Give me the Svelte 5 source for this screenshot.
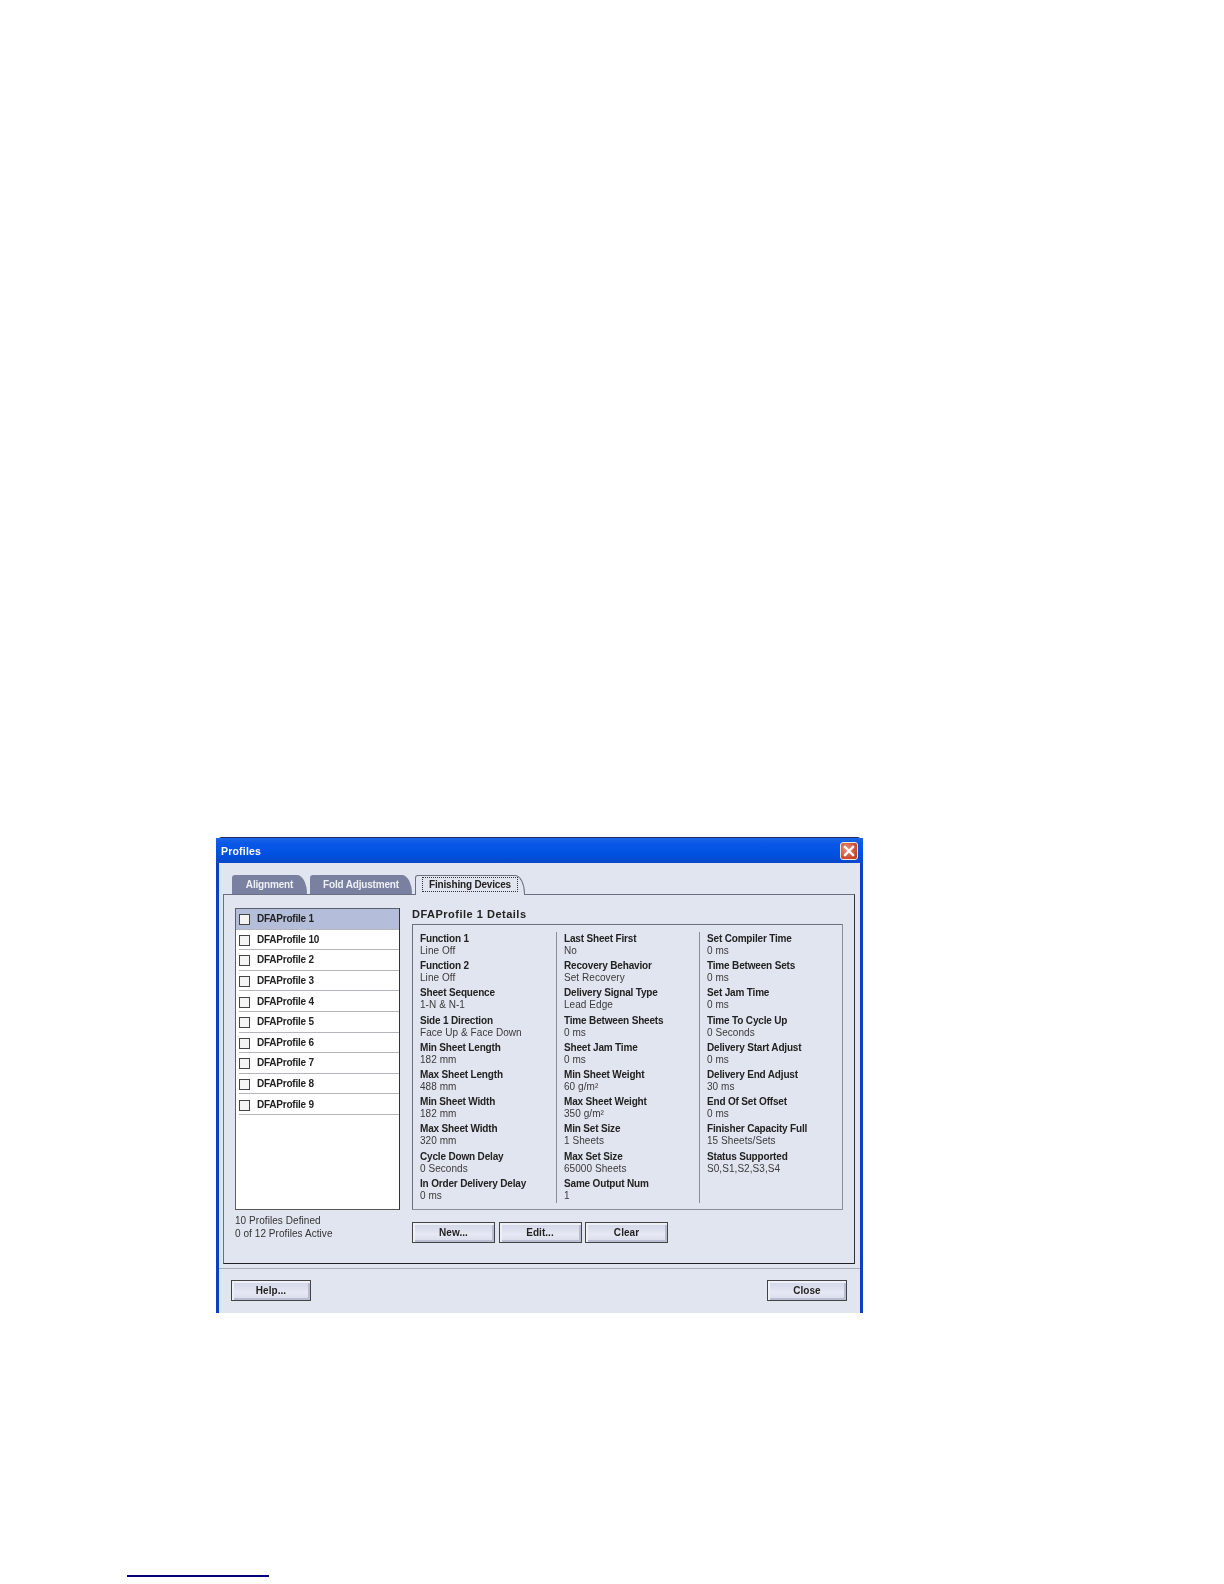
<script>
  const profiles = ['DFAProfile 1','DFAProfile 10','DFAProfile 2','DFAProfile 3','DFAProfile 4','DFAProfile 5','DFAProfile 6','DFAProfile 7','DFAProfile 8','DFAProfile 9'];
  const columns = [
    [['Function 1','Line Off'],['Function 2','Line Off'],['Sheet Sequence','1-N & N-1'],['Side 1 Direction','Face Up & Face Down'],['Min Sheet Length','182 mm'],['Max Sheet Length','488 mm'],['Min Sheet Width','182 mm'],['Max Sheet Width','320 mm'],['Cycle Down Delay','0 Seconds'],['In Order Delivery Delay','0 ms']],
    [['Last Sheet First','No'],['Recovery Behavior','Set Recovery'],['Delivery Signal Type','Lead Edge'],['Time Between Sheets','0 ms'],['Sheet Jam Time','0 ms'],['Min Sheet Weight','60 g/m²'],['Max Sheet Weight','350 g/m²'],['Min Set Size','1 Sheets'],['Max Set Size','65000 Sheets'],['Same Output Num','1']],
    [['Set Compiler Time','0 ms'],['Time Between Sets','0 ms'],['Set Jam Time','0 ms'],['Time To Cycle Up','0 Seconds'],['Delivery Start Adjust','0 ms'],['Delivery End Adjust','30 ms'],['End Of Set Offset','0 ms'],['Finisher Capacity Full','15 Sheets/Sets'],['Status Supported','S0,S1,S2,S3,S4']]
  ];
</script>

<div class="page">
  <div class="window">
    <div class="titlebar">
      <span class="title">Profiles</span>
      <span class="close-x">
        <svg width="18" height="18" viewBox="0 0 18 18"><path d="M5 5l8 8M13 5l-8 8" stroke="#fff" stroke-width="2.4" stroke-linecap="square" fill="none"/></svg>
      </span>
    </div>
    <div class="client">
      <div class="tabs">
        <div class="tab t1">Alignment</div>
        <div class="tab t2">Fold Adjustment</div>
        <div class="tab active"><span class="focus">Finishing Devices</span></div>
      </div>
      <div class="panel">
        <div class="left">
          <div class="list">
            {#each profiles as p, i}
              <div class="row" class:sel={i === 0}><span class="check"></span><span>{p}</span></div>
            {/each}
          </div>
          <div class="count">10 Profiles Defined<br />0 of 12 Profiles Active</div>
        </div>
        <div class="right">
          <div class="heading">DFAProfile 1 Details</div>
          <div class="details">
            {#each columns as col}
              <div class="col">
                {#each col as [label, value]}
                  <div class="item"><div class="label">{label}</div><div class="value">{value}</div></div>
                {/each}
              </div>
            {/each}
          </div>
          <div class="actions">
            <button class="btn">New...</button>
            <button class="btn">Edit...</button>
            <button class="btn">Clear</button>
          </div>
        </div>
      </div>
      <div class="footer">
        <button class="btn foot">Help...</button>
        <button class="btn foot dark">Close</button>
      </div>
    </div>
  </div>
  <div class="rule"></div>
</div>

<style>
  :global(body) { margin: 0; background: #fff; }
  .page { width: 1224px; height: 1584px; padding-top: 837px; box-sizing: border-box; font-family: "Liberation Sans", Arial, sans-serif; color: #222; overflow: hidden; filter: blur(0.4px); }
  .window { margin-left: 216px; width: 647px; height: 476px; box-sizing: border-box; display: flex; flex-direction: column; background: #0f3fc0; border-radius: 6px 6px 0 0; border-top: 1px solid #1a2a60; }
  .titlebar { height: 25px; flex: none; display: flex; align-items: center; justify-content: space-between; padding: 0 5px 0 5px; background: linear-gradient(#1f66e6 0, #0a58e8 20%, #0050e0 70%, #0a48c8 100%); }
  .title { color: #fff; font-size: 10.5px; font-weight: 700; letter-spacing: 0.2px; }
  .close-x { width: 18px; height: 18px; border: 1px solid #f0e8e0; border-radius: 3px; background: radial-gradient(circle at 35% 35%, #e8917a, #c8482a 70%, #b03a20); display: block; box-sizing: border-box; position: relative; }
  .close-x svg { position: absolute; left: -1px; top: -1px; }
  .client { flex: 1; margin: 0 3px 0 3px; background: #e1e5ef; padding: 11px 6px 0 4px; display: flex; flex-direction: column; }
  .tabs { display: flex; height: 20px; padding-left: 9px; align-items: flex-end; font-size: 10px; font-weight: 700; letter-spacing: -0.18px; }
  .tab { height: 19px; display: flex; align-items: center; justify-content: center; box-sizing: border-box; border-radius: 3px 10px 0 0 / 3px 19px 0 0; }
  .t1 { width: 75px; background: #7a81a0; color: #eef0f6; margin-right: 3px; }
  .t2 { width: 102px; background: #7a81a0; color: #eef0f6; margin-right: 3px; }
  .active { width: 110px; height: 20px; background: #e1e5ef; border: 1px solid #6a7080; border-bottom: none; color: #222; margin-bottom: -1px; position: relative; z-index: 1; padding-bottom: 2px; }
  .focus { border: 1px dotted #333; padding: 1px 6px; line-height: 11px; }
  .panel { width: 632px; height: 370px; box-sizing: border-box; border: 1px solid #6a7080; border-right-color: #333; border-bottom-color: #222; display: flex; padding: 13px 0 0 11px; }
  .left { width: 165px; margin-right: 12px; flex: none; }
  .list { height: 302px; box-sizing: border-box; background: #fff; border: 1px solid #5a6070; border-bottom-color: #555; border-right-color: #333; padding-left: 3px; }
  .row { height: 20.6px; box-sizing: border-box; display: flex; align-items: center; font-size: 10px; font-weight: 700; letter-spacing: -0.22px; border-bottom: 1px solid #b4b6bc; gap: 7px; }
  .row.sel { background: #b4bedb; margin-left: -3px; padding-left: 3px; }
  .check { width: 11px; height: 11px; box-sizing: border-box; border: 1px solid #444; background: #f4f4f4; flex: none; margin-top: 2px; }
  .count { margin-top: 4px; font-size: 10px; line-height: 13px; letter-spacing: 0.06px; color: #333; }
  .right { width: 431px; flex: none; }
  .heading { height: 17px; margin-top: -1px; font-size: 11px; font-weight: 700; letter-spacing: 0.5px; line-height: 14px; color: #222; }
  .details { height: 286px; box-sizing: border-box; border: 1px solid #6a7080; border-right-color: #8a8e9c; border-bottom-color: #8a8e9c; padding: 7px 0 0 0; display: grid; grid-template-columns: 144px 143px 1fr; align-content: start; }
  .col { height: 271px; box-sizing: border-box; padding-left: 7px; border-right: 1px solid #8a8e9c; }
  .col:last-child { border-right: none; }
  .item { height: 27.2px; }
  .label { font-size: 10px; font-weight: 700; line-height: 13px; letter-spacing: -0.17px; color: #222; white-space: nowrap; }
  .value { font-size: 10px; line-height: 13px; margin-top: -1px; letter-spacing: 0.06px; color: #3a3a3a; white-space: nowrap; }
  .actions { display: flex; gap: 3.5px; margin-top: 12px; }
  .btn { width: 83px; height: 21px; padding: 0; border: 1px solid #444; box-shadow: inset 2px 2px 0 #eef0f7, inset -2px -2px 0 #b8bdd2; background: linear-gradient(#cfd4e6, #e6e9f3 60%, #d8dcea); font-family: inherit; font-size: 10px; font-weight: 700; color: #222; letter-spacing: 0.05px; }
  .footer { display: flex; justify-content: space-between; margin-top: 4px; padding: 11px 13px 0 12px; border-top: 1px solid #a8acb8; box-sizing: border-box; margin-left: -4px; width: 641px; }
  .foot { width: 80px; height: 21px; }
  .rule { width: 142px; height: 1.5px; margin: 262px 0 0 127px; background: #000080; }
</style>
